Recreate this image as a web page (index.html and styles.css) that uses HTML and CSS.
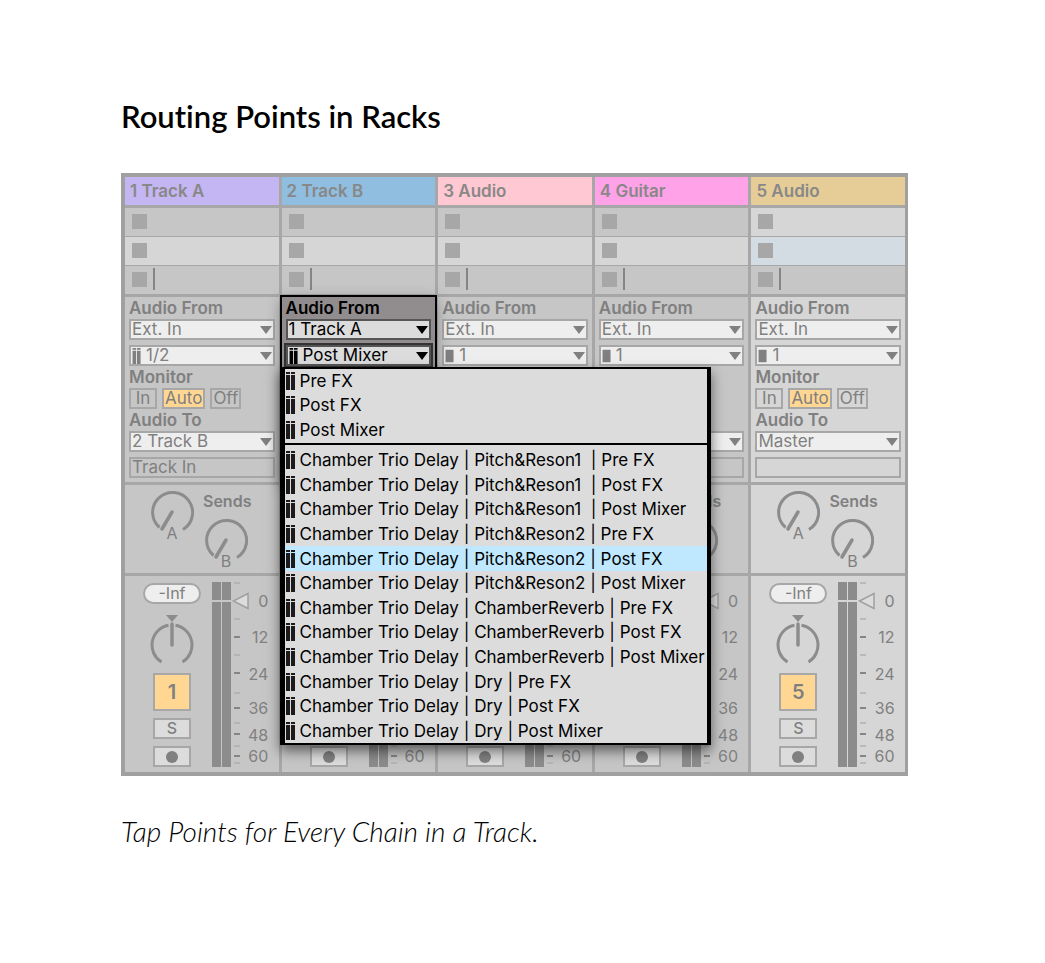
FILE: index.html
```html
<!DOCTYPE html>
<html lang="en">
<head>
<meta charset="utf-8">
<title>Routing Points in Racks</title>
<link rel="stylesheet" href="styles.css">
</head>
<body>
<svg class="symbols" aria-hidden="true">
  <symbol id="arrow" viewBox="0 0 12 10"><path d="M0 1h12L6 9z" fill="currentColor"/></symbol>
  <symbol id="stereo" viewBox="0 0 10 18"><path d="M0 0h4v2H0zM0 3h4v15H0zM5 0h4v2H5zM5 3h4v15H5z" fill="currentColor"/></symbol>
  <symbol id="mono" viewBox="0 0 10 18"><path d="M0 2h9v14H0z" fill="currentColor"/></symbol>
  <symbol id="knob" viewBox="0 0 44 50"><path d="M9.500 37.500A20 20 0 1 1 33 39.500" fill="none" stroke="currentColor" stroke-width="3"/><path d="M22 22L12 39" fill="none" stroke="currentColor" stroke-width="3.500" stroke-linecap="round"/></symbol>
  <symbol id="pan" viewBox="0 -1 44 55"><path d="M16 3h12l-6 7z" fill="currentColor"/><path d="M18.500 13.300A20 20 0 0 0 11.500 50M25.500 13.300A20 20 0 0 1 32.500 50" fill="none" stroke="currentColor" stroke-width="3"/><path d="M22 12v21" fill="none" stroke="currentColor" stroke-width="3.500" stroke-linecap="round"/></symbol>
  <symbol id="meter" viewBox="0 0 38 185"><path d="M0 0h9v18H0zM10 0h9v18h-9zM0 20h9v165H0zM10 20h9v165h-9z" fill="#8c8c8c"/><path d="M22 1h6M22 37h6M22 73h6M22 111h6M22 141h6M22 164h6M22 181h6" stroke="#b0b0b0" stroke-width="1.500"/><path d="M22 55h6M22 91h6M22 126h6M22 152h6M22 174h6" stroke="#858585" stroke-width="2"/><path d="M21.500 19L36 11.500v15z" fill="#dcdcdc" stroke="#a0a0a0" stroke-width="1.500"/></symbol>
</svg>
<main class="page">
  <h1>Routing Points in Racks</h1>
  <div class="mixer">
    <section class="track">
      <h2 class="violet">1 Track A</h2>
      <div class="slots"><div class="slot"><i></i></div><div class="slot light"><i></i></div><div class="slot line"><i></i></div></div>
      <div class="io">
        <label class="name" for="from1">Audio From</label>
        <div class="field"><select id="from1"><option>Ext. In</option></select><svg class="arrow"><use href="#arrow"/></svg></div>
        <div class="field second"><svg class="chan"><use href="#stereo"/></svg><select aria-label="Input channel 1"><option>1/2</option></select><svg class="arrow"><use href="#arrow"/></svg></div>
        <span class="name">Monitor</span>
        <div class="monitor"><button>In</button><button class="on">Auto</button><button>Off</button></div>
        <label class="name" for="to1">Audio To</label>
        <div class="field"><select id="to1"><option>2 Track B</option></select><svg class="arrow"><use href="#arrow"/></svg></div>
        <div class="field second flat"><select aria-label="Output channel 1"><option>Track In</option></select></div>
      </div>
      <div class="sends"><div class="knob"><svg><use href="#knob"/></svg><span>A</span></div><div><span class="sendname">Sends</span><div class="knob low"><svg><use href="#knob"/></svg><span>B</span></div></div></div>
      <div class="strip"><div class="controls"><button class="peak">-Inf</button><svg class="pan"><use href="#pan"/></svg><button class="active">1</button><button>S</button><button aria-label="Arm 1"><i class="dot"></i></button></div><svg class="meter"><use href="#meter"/></svg><div class="scale"><span>0</span><span>12</span><span>24</span><span>36</span><span>48</span><span>60</span></div></div>
    </section>
    <section class="track">
      <h2 class="blue">2 Track B</h2>
      <div class="slots"><div class="slot"><i></i></div><div class="slot light"><i></i></div><div class="slot line"><i></i></div></div>
      <div class="io focus">
        <label class="name" for="from2">Audio From</label>
        <div class="field"><select id="from2"><option>1 Track A</option></select><svg class="arrow"><use href="#arrow"/></svg></div>
        <div class="field second open"><svg class="chan"><use href="#stereo"/></svg><select aria-label="Input channel 2"><option>Post Mixer</option></select><svg class="arrow"><use href="#arrow"/></svg></div>
        <div class="menu" role="listbox" aria-label="Routing points">
          <div class="group short">
            <div role="option"><svg class="chan"><use href="#stereo"/></svg>Pre FX</div>
            <div role="option"><svg class="chan"><use href="#stereo"/></svg>Post FX</div>
            <div role="option"><svg class="chan"><use href="#stereo"/></svg>Post Mixer</div>
          </div>
          <div class="group long">
            <div role="option"><svg class="chan"><use href="#stereo"/></svg>Chamber Trio Delay | Pitch&amp;Reson1  | Pre FX</div>
            <div role="option"><svg class="chan"><use href="#stereo"/></svg>Chamber Trio Delay | Pitch&amp;Reson1  | Post FX</div>
            <div role="option"><svg class="chan"><use href="#stereo"/></svg>Chamber Trio Delay | Pitch&amp;Reson1  | Post Mixer</div>
            <div role="option"><svg class="chan"><use href="#stereo"/></svg>Chamber Trio Delay | Pitch&amp;Reson2 | Pre FX</div>
            <div role="option" class="picked" aria-selected="true"><svg class="chan"><use href="#stereo"/></svg>Chamber Trio Delay | Pitch&amp;Reson2 | Post FX</div>
            <div role="option"><svg class="chan"><use href="#stereo"/></svg>Chamber Trio Delay | Pitch&amp;Reson2 | Post Mixer</div>
            <div role="option"><svg class="chan"><use href="#stereo"/></svg>Chamber Trio Delay | ChamberReverb | Pre FX</div>
            <div role="option"><svg class="chan"><use href="#stereo"/></svg>Chamber Trio Delay | ChamberReverb | Post FX</div>
            <div role="option"><svg class="chan"><use href="#stereo"/></svg>Chamber Trio Delay | ChamberReverb | Post Mixer</div>
            <div role="option"><svg class="chan"><use href="#stereo"/></svg>Chamber Trio Delay | Dry | Pre FX</div>
            <div role="option"><svg class="chan"><use href="#stereo"/></svg>Chamber Trio Delay | Dry | Post FX</div>
            <div role="option"><svg class="chan"><use href="#stereo"/></svg>Chamber Trio Delay | Dry | Post Mixer</div>
          </div>
        </div>
      </div>
      <div class="sends"></div>
      <div class="strip"><div class="controls"><button aria-label="Arm 2"><i class="dot"></i></button></div><svg class="meter"><use href="#meter"/></svg><div class="scale"><span class="last">60</span></div></div>
    </section>
    <section class="track">
      <h2 class="pink">3 Audio</h2>
      <div class="slots"><div class="slot"><i></i></div><div class="slot light"><i></i></div><div class="slot line"><i></i></div></div>
      <div class="io">
        <label class="name" for="from3">Audio From</label>
        <div class="field"><select id="from3"><option>Ext. In</option></select><svg class="arrow"><use href="#arrow"/></svg></div>
        <div class="field second"><svg class="chan"><use href="#mono"/></svg><select aria-label="Input channel 3"><option>1</option></select><svg class="arrow"><use href="#arrow"/></svg></div>
      </div>
      <div class="sends"></div>
      <div class="strip"><div class="controls"><button aria-label="Arm 3"><i class="dot"></i></button></div><svg class="meter"><use href="#meter"/></svg><div class="scale"><span class="last">60</span></div></div>
    </section>
    <section class="track">
      <h2 class="magenta">4 Guitar</h2>
      <div class="slots"><div class="slot"><i></i></div><div class="slot light"><i></i></div><div class="slot line"><i></i></div></div>
      <div class="io">
        <label class="name" for="from4">Audio From</label>
        <div class="field"><select id="from4"><option>Ext. In</option></select><svg class="arrow"><use href="#arrow"/></svg></div>
        <div class="field second"><svg class="chan"><use href="#mono"/></svg><select aria-label="Input channel 4"><option>1</option></select><svg class="arrow"><use href="#arrow"/></svg></div>
        <span class="name">Monitor</span>
        <div class="monitor"><button>In</button><button class="on">Auto</button><button>Off</button></div>
        <label class="name" for="to4">Audio To</label>
        <div class="field"><select id="to4"><option>Master</option></select><svg class="arrow"><use href="#arrow"/></svg></div>
        <div class="field second flat"></div>
      </div>
      <div class="sends"><div class="knob"><svg><use href="#knob"/></svg></div><div><span class="sendname">Sends</span><div class="knob low"><svg><use href="#knob"/></svg></div></div></div>
      <div class="strip"><div class="controls"><button aria-label="Arm 4"><i class="dot"></i></button></div><svg class="meter"><use href="#meter"/></svg><div class="scale"><span>0</span><span>12</span><span>24</span><span>36</span><span>48</span><span>60</span></div></div>
    </section>
    <section class="track bright">
      <h2 class="gold">5 Audio</h2>
      <div class="slots"><div class="slot light"><i></i></div><div class="slot selected"><i></i></div><div class="slot line"><i></i></div></div>
      <div class="io">
        <label class="name" for="from5">Audio From</label>
        <div class="field"><select id="from5"><option>Ext. In</option></select><svg class="arrow"><use href="#arrow"/></svg></div>
        <div class="field second"><svg class="chan"><use href="#mono"/></svg><select aria-label="Input channel 5"><option>1</option></select><svg class="arrow"><use href="#arrow"/></svg></div>
        <span class="name">Monitor</span>
        <div class="monitor"><button>In</button><button class="on">Auto</button><button>Off</button></div>
        <label class="name" for="to5">Audio To</label>
        <div class="field"><select id="to5"><option>Master</option></select><svg class="arrow"><use href="#arrow"/></svg></div>
        <div class="field second flat"></div>
      </div>
      <div class="sends"><div class="knob"><svg><use href="#knob"/></svg><span>A</span></div><div><span class="sendname">Sends</span><div class="knob low"><svg><use href="#knob"/></svg><span>B</span></div></div></div>
      <div class="strip"><div class="controls"><button class="peak">-Inf</button><svg class="pan"><use href="#pan"/></svg><button class="active">5</button><button>S</button><button aria-label="Arm 5"><i class="dot"></i></button></div><svg class="meter"><use href="#meter"/></svg><div class="scale"><span>0</span><span>12</span><span>24</span><span>36</span><span>48</span><span>60</span></div></div>
    </section>
  </div>
  <p class="caption">Tap Points for Every Chain in a Track.</p>
</main>
</body>
</html>
```

FILE: styles.css
```css
* { box-sizing: border-box; }
body { margin: 0; background: #fff; color: #000; font-family: Lato, sans-serif; font-variant-ligatures: none; }
.symbols { display: none; }
.page { padding: 96px 137px 96px 121px; }
h1 { margin: 0 0 37px; font-size: 31px; line-height: 40px; font-weight: 600; }
.caption { margin: 35px 0 0; font-size: 28px; line-height: 40px; font-weight: 300; font-style: italic; }

.mixer {
  display: grid;
  grid-template-columns: repeat(5, minmax(0, 1fr));
  gap: 3px;
  border: 4px solid #a0a0a0;
  border-right-width: 3px;
  background: #a7a7a7;
  color: #808080;
  font: 400 17px/20px Inter, sans-serif;
}
.track { display: flex; flex-direction: column; gap: 3px; }
.track h2 { margin: 0; padding: 0 5px; font-size: 17px; line-height: 28px; font-weight: 600; color: #888; }
.violet { background: #c4b6f2; }
.blue { background: #90bee0; }
.pink { background: #ffc8d2; }
.magenta { background: #ffa2e8; }
.gold { background: #e6cd98; }

.slots { display: grid; gap: 1px; }
.slot { display: flex; align-items: center; gap: 6px; height: 28px; padding: 0 0 2px 7px; background: #c6c6c6; }
.slot i { width: 15px; height: 15px; background: #a7a7a7; }
.slot.light { background: #d6d6d6; }
.slot.selected { background: #d2dce2; }
.slot.line::after { content: ""; width: 2px; height: 22px; background: #858585; }

.io { height: 185px; padding: 0 4px; background: #c6c6c6; }
.sends { display: flex; gap: 9px; height: 88px; padding: 5px 0 0 25px; background: #c6c6c6; }
.strip { display: flex; align-items: flex-end; height: 196px; padding: 0 0 5px 18px; background: #c6c6c6; }
.bright .io, .bright .sends, .bright .strip { background: #d6d6d6; }

.name { display: block; font-weight: 600; line-height: 22px; }
.field { display: flex; align-items: center; height: 21px; padding: 0 1px; border: 2px solid #a7a7a7; background: #eee; }
.second { margin-top: 5px; }
.flat { background: transparent; }
select {
  flex: 1; min-width: 0; height: 17px; padding: 0; border: 0;
  appearance: none; background: transparent; color: inherit; font: inherit; line-height: 17px;
}
.arrow { flex: none; width: 12px; height: 10px; pointer-events: none; }
.chan { flex: none; width: 10px; height: 18px; margin-right: 4px; }
.field .chan { height: 16px; }

button { padding: 0; border: 2px solid #a7a7a7; background: #dcdcdc; color: inherit; font: inherit; line-height: 17px; }
.monitor { display: flex; gap: 5px; }
.monitor button { min-width: 28px; height: 21px; padding: 0 1px; background: transparent; }
.monitor .on, .controls .active { background: #ffd793; }

.knob { display: flex; flex-direction: column; align-items: center; width: 44px; height: 50px; }
.low { margin-left: 1px; }
.knob svg { flex: none; width: 44px; height: 50px; color: #8c8c8c; }
.knob span { margin-top: -17px; line-height: 20px; font-size: 16px; }
.sendname { display: block; margin-bottom: 6px; font-weight: 600; line-height: 22px; font-size: 16px; }

.controls { display: flex; flex-direction: column; align-items: center; gap: 7px; width: 58px; }
.controls button { display: grid; place-items: center; width: 38px; height: 21px; font-size: 16px; font-weight: 500; }
.controls .peak { width: 58px; border-radius: 11px; background: #eee; font-weight: 400; }
.controls .active { height: 38px; font-size: 20px; font-weight: 600; }
.pan { width: 44px; height: 55px; color: #8c8c8c; }
.dot { width: 12px; height: 12px; border-radius: 50%; background: #808080; }
.meter { flex: none; width: 38px; height: 185px; margin-left: 11px; }
.scale {
  display: grid; width: 20px; height: 176px; margin-left: -2px;
  grid-template-rows: 36px 37px 34px 27px 21px 20px; font-size: 16px; text-align: right;
}
.last { grid-row: 6; }

.focus { position: relative; z-index: 1; background: #918d8e; box-shadow: 0 0 0 2px #000, 0 4px 14px #0006; color: #000; }
.focus .field { border-color: #555; background: #dcdcdc; }
.focus .open { box-shadow: 0 0 0 2px #333; }
.menu {
  position: absolute; top: 70px; left: -2px; min-width: 431px;
  border: solid #000; border-width: 2px 4px 2px 5px;
  background: #dcdcdc; box-shadow: 0 6px 12px #0008;
}
.group { display: grid; grid-auto-rows: 1fr; }
.short { height: 74px; padding-bottom: 1px; }
.long { height: 300px; padding-top: 3px; border-top: 2px solid #000; }
.menu [role="option"] { display: flex; align-items: center; padding: 0 1px; white-space: pre; }
.menu .chan { color: #1c1a1b; }
.menu .picked { background: #bfe8ff; }
```
